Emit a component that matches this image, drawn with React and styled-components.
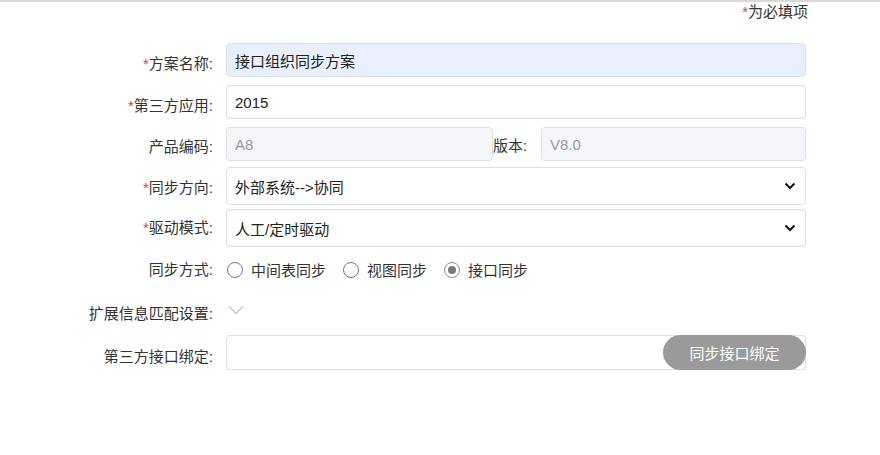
import styled, { createGlobalStyle } from "styled-components";

const GlobalStyle = createGlobalStyle`
  html, body {
    margin: 0;
    padding: 0;
    background: #fff;
  }
  body {
    font-family: "Liberation Sans", "Noto Sans CJK SC", sans-serif;
    font-size: 14px;
    color: #333;
  }
`;

const Page = styled.div`
  width: 880px;
  height: 455px;
  border-top: 2px solid #d9d9d9;
  box-sizing: border-box;
`;

const Note = styled.div`
  display: flex;
  justify-content: flex-end;
  padding: 1px 72px 0 0;
  height: 20px;
  line-height: 18px;
  font-size: 15px;
  color: #333;
`;

const Star = styled.span`
  color: #e4393c;
`;

const Form = styled.div`
  display: grid;
  grid-template-columns: 213px 580px;
  column-gap: 13px;
  align-items: center;
  margin-top: 20px;
`;

const Label = styled.label`
  text-align: right;
  font-size: 15px;
  line-height: 18px;
  color: #333;
  white-space: nowrap;
`;

const Field = styled.div`
  display: flex;
  align-items: center;
  height: ${(p) => p.$h || 34}px;
  margin-bottom: ${(p) => p.$mb ?? 8}px;
`;

const Input = styled.div`
  box-sizing: border-box;
  flex: 1;
  height: 100%;
  display: flex;
  align-items: center;
  padding: 0 8px;
  border: 1px solid #dcdfe6;
  border-radius: 4px;
  font-size: 15px;
  color: ${(p) => (p.$disabled ? "#999" : "#222")};
  background: ${(p) =>
    p.$autofill ? "#e8f0fe" : p.$disabled ? "#f5f6fa" : "#fff"};
  position: relative;
`;

const Half = styled(Input)`
  flex: 0 0 ${(p) => p.$w}px;
`;

const InlineLabel = styled.span`
  width: 48px;
  font-size: 15px;
  color: #333;
`;

const Arrow = styled.svg`
  margin-left: auto;
  margin-right: 1px;
`;

const Radios = styled.div`
  display: flex;
  align-items: center;
  gap: 16px;
  height: 100%;
`;

const RadioItem = styled.span`
  display: flex;
  align-items: center;
  gap: 8px;
  font-size: 15px;
  color: #333;
`;

const Circle = styled.span`
  box-sizing: border-box;
  width: 16px;
  height: 16px;
  border-radius: 50%;
  border: 1px solid ${(p) => (p.$checked ? "#8a8a8a" : "#767676")};
  margin-left: 1px;
  display: flex;
  align-items: center;
  justify-content: center;
  &::after {
    content: "";
    width: 8px;
    height: 8px;
    border-radius: 50%;
    background: ${(p) => (p.$checked ? "#7a7a7a" : "transparent")};
  }
`;

const BindButton = styled.button`
  position: absolute;
  right: -1px;
  top: -1px;
  height: 35px;
  width: 143px;
  border: none;
  border-radius: 18px;
  background: #9a9a9a;
  color: #fff;
  font-family: "Liberation Sans", "Noto Sans CJK SC", sans-serif;
  font-size: 15px;
  padding: 0;
`;

const Chevron = () => (
  <svg width="16" height="10" viewBox="0 0 16 10" style={{ marginLeft: 2 }}>
    <path d="M1 1.5 L8 8.5 L15 1.5" fill="none" stroke="#c8c8c8" strokeWidth="1.3" />
  </svg>
);

const SelectArrow = () => (
  <Arrow width="12" height="8" viewBox="0 0 12 8">
    <path d="M1.5 1.5 L6 6 L10.5 1.5" fill="none" stroke="#111" strokeWidth="2" />
  </Arrow>
);

export default function App() {
  return (
    <Page>
      <GlobalStyle />
      <Note>
        <Star>*</Star>为必填项
      </Note>
      <Form>
        <Label>
          <Star>*</Star>方案名称:
        </Label>
        <Field>
          <Input $autofill>接口组织同步方案</Input>
        </Field>

        <Label>
          <Star>*</Star>第三方应用:
        </Label>
        <Field>
          <Input>2015</Input>
        </Field>

        <Label>产品编码:</Label>
        <Field $mb={6}>
          <Half $w={267} $disabled>A8</Half>
          <InlineLabel>版本:</InlineLabel>
          <Input $disabled>V8.0</Input>
        </Field>

        <Label>
          <Star>*</Star>同步方向:
        </Label>
        <Field $h={38} $mb={4}>
          <Input>
            外部系统--&gt;协同
            <SelectArrow />
          </Input>
        </Field>

        <Label>
          <Star>*</Star>驱动模式:
        </Label>
        <Field $h={38} $mb={0}>
          <Input>
            人工/定时驱动
            <SelectArrow />
          </Input>
        </Field>

        <Label>同步方式:</Label>
        <Field $h={45} $mb={0}>
          <Radios>
            <RadioItem>
              <Circle />
              中间表同步
            </RadioItem>
            <RadioItem>
              <Circle />
              视图同步
            </RadioItem>
            <RadioItem>
              <Circle $checked />
              接口同步
            </RadioItem>
          </Radios>
        </Field>

        <Label>扩展信息匹配设置:</Label>
        <Field $h={36} $mb={7}>
          <Chevron />
        </Field>

        <Label>第三方接口绑定:</Label>
        <Field $h={35}>
          <Input>
            <BindButton>同步接口绑定</BindButton>
          </Input>
        </Field>
      </Form>
    </Page>
  );
}
